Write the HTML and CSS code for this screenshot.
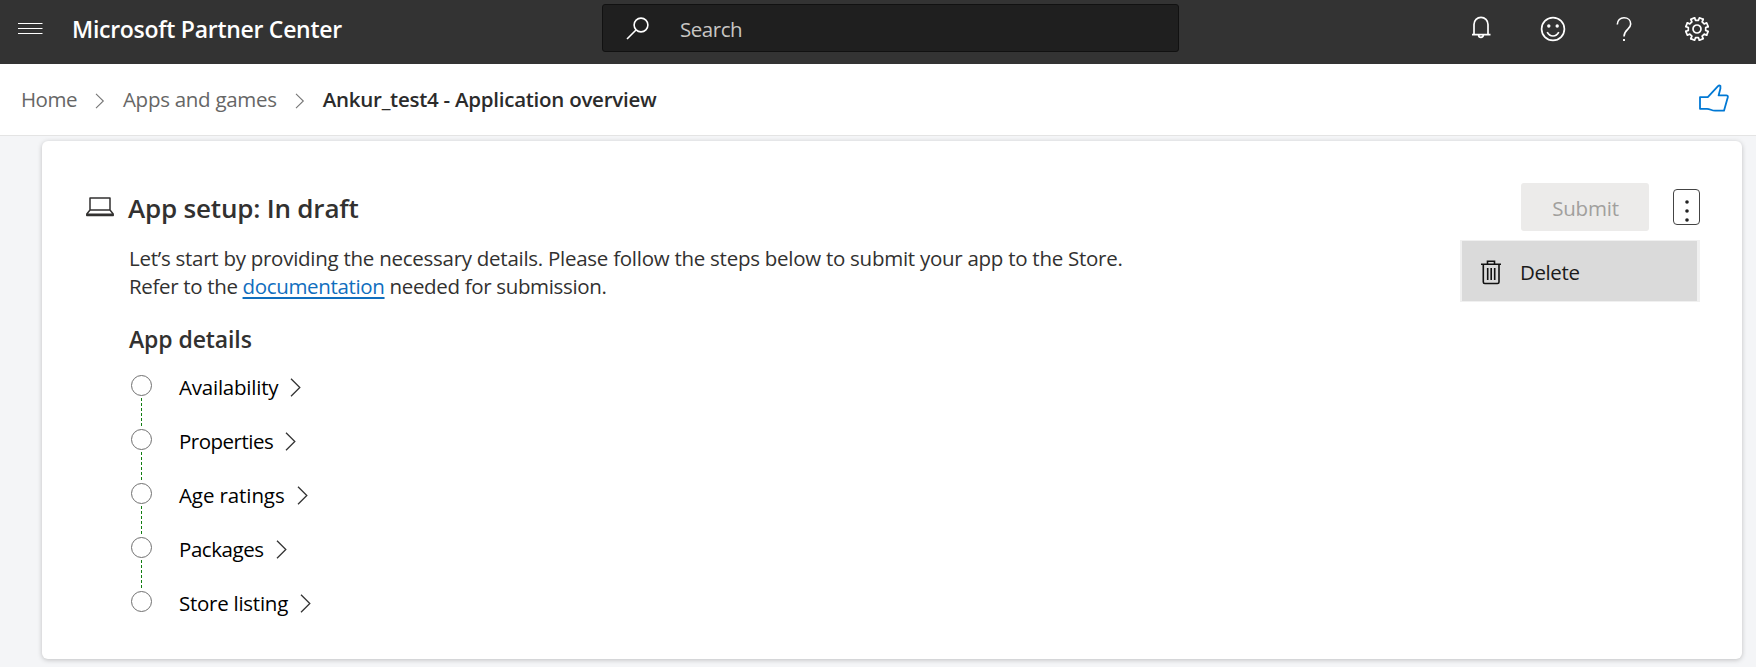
FILE: index.html
```html
<!DOCTYPE html>
<html lang="en">
<head>
<meta charset="utf-8">
<title>Microsoft Partner Center</title>
<link rel="stylesheet" href="styles.css">
</head>
<body>
<header class="topbar">
  <svg class="menu" width="26" height="14" viewBox="0 0 26 14" stroke="#fff"><path d="M0 1.5H24.5M0 6.5H24.5M0 11.5H24.5"/></svg>
  <span class="brand">Microsoft Partner Center</span>
  <div class="search">
    <svg width="24" height="24" viewBox="0 0 24 24" fill="none" stroke="#fff" stroke-width="1.6"><circle cx="15" cy="8" r="6.9"/><path d="M10 13L1 22"/></svg>
    <span class="search-text">Search</span>
  </div>
  <nav class="tools">
    <svg width="26" height="26" viewBox="0 0 26 26" fill="none" stroke="#fff" stroke-width="1.7"><path d="M6 18.5V8.5A7 7.2 0 0 1 20 8.5V18.5M4 18.7H22.5M10.6 19A2.4 2.4 0 0 0 15.4 19"/></svg>
    <svg width="26" height="26" viewBox="0 0 26 26" fill="none" stroke="#fff" stroke-width="1.7"><circle cx="13" cy="13" r="11.4"/><path d="M7.2 16.2Q9.2 20 13 20T18.8 16.2"/><circle cx="8.8" cy="10" r="1.7" fill="#fff" stroke="none"/><circle cx="17.2" cy="10" r="1.7" fill="#fff" stroke="none"/></svg>
    <svg width="26" height="26" viewBox="0 0 26 26" fill="none" stroke="#fff" stroke-width="1.6"><path d="M5.3 8.5C5.3 4.2 8.3 1.8 12 1.8C16 1.8 18.7 4.5 18.7 8C18.7 13.5 12 13.5 12 20.5"/><path d="M12 23V25" stroke-width="1.9"/></svg>
    <svg width="26" height="26" viewBox="-13 -13 26 26" fill="none" stroke="#fff" stroke-width="1.7" stroke-linejoin="round" stroke-linecap="round">
      <circle r="4"/>
      <path id="tooth" d="M-2.4-11.2L-1.5-8.7H1.5L2.4-11.2L6.2-9.6"/>
      <use href="#tooth" transform="rotate(45)"/><use href="#tooth" transform="rotate(90)"/><use href="#tooth" transform="rotate(135)"/><use href="#tooth" transform="rotate(180)"/><use href="#tooth" transform="rotate(225)"/><use href="#tooth" transform="rotate(270)"/><use href="#tooth" transform="rotate(315)"/>
    </svg>
  </nav>
</header>
<div class="crumbs">
  <span class="crumb home">Home</span>
  <svg width="10" height="16" viewBox="0 0 10 16" fill="none" stroke="#767676" stroke-width="1.1"><path d="M1 .8L8.3 8L1 15.2"/></svg>
  <span class="crumb apps">Apps and games</span>
  <svg width="10" height="16" viewBox="0 0 10 16" fill="none" stroke="#767676" stroke-width="1.1"><path d="M1 .8L8.3 8L1 15.2"/></svg>
  <span class="crumb current">Ankur_test4 - Application overview</span>
  <svg class="thumb" width="30" height="28" viewBox="0 0 30 28" fill="none" stroke="#0078d4" stroke-width="1.8" stroke-linejoin="round"><path d="M1 13.1H8.8L19 2.2Q20.3 1 21.4 2V4.5L19.6 11.4H27.2Q29.2 11.4 28.8 13.3L25 26.7H16C12.5 26.7 11.2 24.8 8 24.8H1Z"/></svg>
</div>
<main class="card">
  <div class="card-head">
    <svg class="laptop" width="28" height="20" viewBox="0 0 28 20" fill="none" stroke="#323130" stroke-width="1.5" stroke-linejoin="round"><path d="M4 1H24V13H4ZM4 13L.8 17V18.5H27.2V17L24 13M.8 17.2H27.2"/></svg>
    <h1>App setup: In draft</h1>
    <button class="submit">Submit</button>
    <div class="more">
      <button class="dots" aria-label="More"><svg width="25" height="34" fill="#222"><circle cx="13" cy="12" r="1.8"/><circle cx="13" cy="21" r="1.8"/><circle cx="13" cy="30" r="1.8"/></svg></button>
      <div class="menu-pop">
        <svg width="20" height="25" viewBox="0 0 20 25" fill="none" stroke="#111" stroke-width="1.6"><path d="M0 4.3H20M6.5 4V1.2H13.5V4M2.3 4.3V22Q2.3 23.5 3.8 23.5H16.5Q18 23.5 18 22V4.3M6.7 8V20M10.2 8V20M13.7 8V20"/></svg>
        <span class="delete">Delete</span>
      </div>
    </div>
  </div>
  <div class="body">
    <p class="intro">Let’s start by providing the necessary details. Please follow the steps below to submit your app to the Store.</p>
    <p class="refer">Refer to the <a>documentation</a> needed for submission.</p>
    <h2>App details</h2>
    <ul class="steps">
      <li><i class="dot"></i><span class="availability">Availability</span><svg width="11" height="19" fill="none" stroke="#333" stroke-width="1.3"><path d="M1 .8L9.8 9.5L1 18.2"/></svg></li>
      <li><i class="dot"></i><span class="properties">Properties</span><svg width="11" height="19" fill="none" stroke="#333" stroke-width="1.3"><path d="M1 .8L9.8 9.5L1 18.2"/></svg></li>
      <li><i class="dot"></i><span class="ratings">Age ratings</span><svg width="11" height="19" fill="none" stroke="#333" stroke-width="1.3"><path d="M1 .8L9.8 9.5L1 18.2"/></svg></li>
      <li><i class="dot"></i><span class="packages">Packages</span><svg width="11" height="19" fill="none" stroke="#333" stroke-width="1.3"><path d="M1 .8L9.8 9.5L1 18.2"/></svg></li>
      <li><i class="dot"></i><span class="listing">Store listing</span><svg width="11" height="19" fill="none" stroke="#333" stroke-width="1.3"><path d="M1 .8L9.8 9.5L1 18.2"/></svg></li>
    </ul>
  </div>
</main>
</body>
</html>
```
FILE: styles.css
```css
* { box-sizing: border-box; }
body { margin: 0; background: #f4f5f7; font-family: "Open Sans", "Noto Sans", sans-serif; font-size: 20.5px; color: #323130; height: 667px; overflow: hidden; }
svg { flex: none; display: block; }
button { font: inherit; padding: 0; }
.topbar { height: 64px; background: #333; display: flex; align-items: flex-start; color: #fff; }
.menu { margin: 22px 0 0 18px; }
.brand { margin-left: 28px; line-height: 59px; font-size: 23px; font-weight: 600; letter-spacing: -.28px; width: 530px; white-space: nowrap; }
.search { width: 577px; height: 48px; margin-top: 4px; border: 1px solid #111; border-radius: 3px; background: #1f1f1f; display: flex; padding: 12px 0 0 23px; }
.search-text { margin-left: 30px; line-height: 25px; color: #c8c6c4; letter-spacing: -.45px; }
.tools { display: flex; margin: 16px 0 0 289px; gap: 46px; }
.crumbs { height: 72px; background: #fff; border-bottom: 1px solid #e4e4e4; display: flex; align-items: center; padding: 0 27px 0 21px; white-space: nowrap; color: #666; }
.crumb { line-height: 71px; }
.crumbs svg { margin: 2px 18px 0; }
.home { letter-spacing: -.5px; }
.apps { letter-spacing: -.28px; }
.current { font-weight: 600; color: #2b2b2b; letter-spacing: -.26px; }
.crumbs .thumb { margin: -3px 0 0 auto; }
.card { margin: 5px 14px 0 42px; height: 518px; background: #fff; border-radius: 6px; box-shadow: 0 1px 5px rgba(0,0,0,.22); padding: 42px 42px 0 44px; }
.card-head { display: flex; height: 54px; white-space: nowrap; }
.laptop { margin-top: 14px; }
h1 { margin: 0 0 0 14px; font-size: 26px; line-height: 50px; font-weight: 600; letter-spacing: -.19px; }
.submit { margin-left: auto; width: 128px; height: 48px; border: 0; border-radius: 3px; background: #ecebea; color: #a19f9d; letter-spacing: -.2px; padding: 2px 0 0 1px; }
.more { position: relative; margin: 6px 0 0 24px; height: 36px; }
.dots { display: block; width: 27px; height: 36px; border: 1px solid #444; border-radius: 4px; background: #fff; }
.menu-pop { position: absolute; right: 0; top: 51px; width: 240px; height: 62px; border: 1px solid #f0f0f0; border-width: 1px 3px 1px 2px; background: #dadada; display: flex; align-items: center; gap: 19px; padding-left: 19px; color: #1b1b1b; }
.menu-pop svg { margin-top: 2px; }
.delete { letter-spacing: -.4px; padding-top: 2px; }
.body { padding-left: 43px; padding-top: 7px; }
p { margin: 0; line-height: 28px; white-space: nowrap; }
.intro { letter-spacing: -.265px; }
.refer { letter-spacing: -.34px; }
a { color: #106ebe; text-decoration: underline; text-decoration-thickness: 2px; text-underline-offset: 3px; }
h2 { margin: 22px 0 0; font-size: 23px; line-height: 34px; font-weight: 600; letter-spacing: -.1px; }
.steps { list-style: none; margin: 17px 0 0; padding: 0 0 0 2px; color: #000; }
.steps li { display: flex; position: relative; height: 54px; line-height: 28px; }
.steps li:not(:last-child)::after { content: ""; position: absolute; left: 10px; top: 25px; width: 1px; height: 29px; background: repeating-linear-gradient(#107c10 0 3px, #fff 3px 5px); }
.dot { width: 21px; height: 21px; border: 1.5px solid #707070; border-radius: 50%; margin: 2px 27px 0 0; }
.steps svg { margin: 5px 0 0 12px; }
.availability { letter-spacing: -.22px; }
.properties { letter-spacing: -.5px; }
.ratings { letter-spacing: -.1px; }
.packages { letter-spacing: -.45px; }
.listing { letter-spacing: -.26px; }
```
